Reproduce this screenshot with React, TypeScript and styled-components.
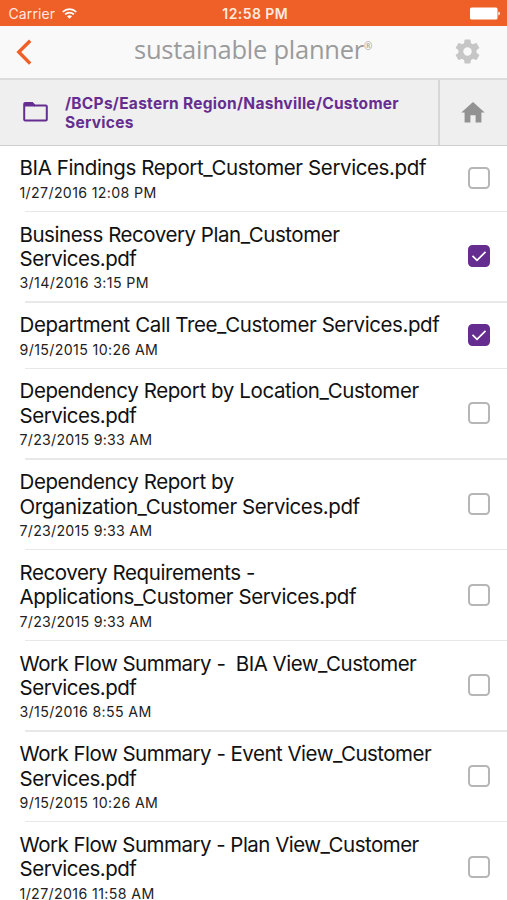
import React from "react";
import styled, { createGlobalStyle } from "styled-components";

const GlobalStyle = createGlobalStyle`
  * { box-sizing: border-box; }
  html, body { margin: 0; padding: 0; background: #fff; }
  body { overflow: hidden; font-family: Inter, "Liberation Sans", sans-serif; color: #111; }
`;

const Screen = styled.div`
  width: 507px;
  height: 900px;
  overflow: hidden;
  display: flex;
  flex-direction: column;
  background: #fff;
`;

const StatusBar = styled.div`
  flex: none;
  height: 25.5px;
  padding: 2px 7px 0 8.5px;
  display: grid;
  grid-template-columns: 1fr auto 1fr;
  align-items: center;
  background: #ef5f28;
  color: #ffe9df;
`;

const Carrier = styled.div`
  display: flex;
  align-items: center;
  gap: 7px;
  font-size: 14px;
  line-height: 20px;
  letter-spacing: 0.1px;
`;

const Clock = styled.div`
  padding-left: 2px;
  font-size: 14px;
  line-height: 20px;
  font-weight: 600;
  letter-spacing: 0.45px;
  white-space: nowrap;
`;

const Battery = styled.div`
  display: flex;
  justify-content: flex-end;
`;

const NavBar = styled.header`
  flex: none;
  height: 54.2px;
  padding: 0 25px 0 16px;
  display: flex;
  align-items: center;
  justify-content: space-between;
  background: #f9f9f9;
  border-bottom: 2px solid #dcdcdc;
`;

const IconButton = styled.button`
  padding: 0;
  border: 0;
  background: none;
  display: flex;
`;

const Brand = styled.h1`
  margin: 0 0 5px 20px;
  font-family: "Open Sans", "Noto Sans", sans-serif;
  font-size: 25.5px;
  font-weight: 400;
  line-height: 34px;
  letter-spacing: -0.25px;
  color: #9b9b9b;
  white-space: nowrap;
`;

const Registered = styled.span`
  font-size: 10px;
  line-height: 1;
  vertical-align: 9px;
`;

const PathBar = styled.div`
  flex: none;
  height: 66px;
  display: flex;
  background: #efefef;
  border-bottom: 1.5px solid #d0d0d0;
`;

const PathInfo = styled.div`
  flex: 1;
  padding-left: 23px;
  display: flex;
  align-items: center;
  gap: 17px;
`;

const PathText = styled.div`
  width: 350px;
  margin-top: 1px;
  font-size: 15.5px;
  font-weight: 700;
  line-height: 19px;
  letter-spacing: 0.28px;
  color: #662d91;
`;

const HomeCell = styled.div`
  width: 69px;
  padding-right: 2px;
  display: flex;
  align-items: center;
  justify-content: center;
  border-left: 2px solid #d6d6d6;
`;

const List = styled.ul`
  margin: 0;
  padding: 0;
  list-style: none;
`;

const Row = styled.li`
  padding: 10.6px 17px 0 19.5px;
  display: flex;
  flex-wrap: wrap;
  align-items: center;
  justify-content: space-between;
`;

const Divider = styled.div`
  width: calc(100% + 11px);
  height: 1.3px;
  margin: 5.9px -17px 0 5.5px;
  background: #e8e8e8;
`;

const Title = styled.div<{ $tracking: number }>`
  font-size: 20.5px;
  line-height: 24.45px;
  letter-spacing: ${(p) => p.$tracking}px;
  white-space: pre;
`;

const Stamp = styled.div<{ $tracking: number }>`
  font-size: 14.2px;
  line-height: 24px;
  letter-spacing: ${(p) => p.$tracking}px;
  color: #222;
`;

const Box = styled.span<{ $checked: boolean }>`
  flex: none;
  width: 22px;
  height: 22px;
  margin-bottom: 5px;
  display: flex;
  align-items: center;
  justify-content: center;
  border-radius: 4.5px;
  border: 2px solid ${(p) => (p.$checked ? "#662d91" : "#b6b6b6")};
  background: ${(p) => (p.$checked ? "#662d91" : "#fff")};
`;

type Doc = {
  lines: string[];
  tracking: number[];
  date: string;
  dateTracking: number;
  checked?: boolean;
};

const docs: Doc[] = [
  { lines: ["BIA Findings Report_Customer Services.pdf"], tracking: [-0.39], date: "1/27/2016 12:08 PM", dateTracking: 0.34 },
  { lines: ["Business Recovery Plan_Customer", "Services.pdf"], tracking: [-0.46, -0.48], date: "3/14/2016 3:15 PM", dateTracking: 0.36, checked: true },
  { lines: ["Department Call Tree_Customer Services.pdf"], tracking: [-0.41], date: "9/15/2015 10:26 AM", dateTracking: 0.36, checked: true },
  { lines: ["Dependency Report by Location_Customer", "Services.pdf"], tracking: [-0.4, -0.48], date: "7/23/2015 9:33 AM", dateTracking: 0.25 },
  { lines: ["Dependency Report by", "Organization_Customer Services.pdf"], tracking: [-0.4, -0.42], date: "7/23/2015 9:33 AM", dateTracking: 0.25 },
  { lines: ["Recovery Requirements -", "Applications_Customer Services.pdf"], tracking: [-0.42, -0.42], date: "7/23/2015 9:33 AM", dateTracking: 0.25 },
  { lines: ["Work Flow Summary -  BIA View_Customer", "Services.pdf"], tracking: [-0.51, -0.48], date: "3/15/2016 8:55 AM", dateTracking: 0.34 },
  { lines: ["Work Flow Summary - Event View_Customer", "Services.pdf"], tracking: [-0.51, -0.48], date: "9/15/2015 10:26 AM", dateTracking: 0.36 },
  { lines: ["Work Flow Summary - Plan View_Customer", "Services.pdf"], tracking: [-0.52, -0.48], date: "1/27/2016 11:58 AM", dateTracking: 0.37 },
];

const WifiIcon = () => (
  <svg width="15" height="11" viewBox="0 0 15 11" fill="none" stroke="#fff" strokeWidth="1.7">
    <path d="M.7 4C4.5.2 10.5.2 14.3 4" />
    <path d="M3.1 6.4C5.6 4 9.4 4 11.9 6.4" />
    <path d="M7.5 10.8 5 8.2Q7.5 6.3 10 8.2Z" fill="#fff" stroke="none" />
  </svg>
);

const BatteryIcon = () => (
  <svg width="30" height="13" viewBox="0 0 30 13" fill="#fff">
    <rect x="0" y="0.5" width="27.5" height="12" rx="1.5" />
    <path d="M28.4 4.5Q30 5.2 30 6.5T28.4 8.5Z" />
  </svg>
);

const BackIcon = () => (
  <svg width="17" height="26" viewBox="0 0 17 26" fill="none" stroke="#ef5f28" strokeWidth="3.4">
    <path d="M14.2 1.8 2.8 13 14.2 24.6" />
  </svg>
);

const GearIcon = () => (
  <svg width="29" height="30" viewBox="0 0 24 24.8" fill="#c6c6c6">
    <path d="M19.43 12.98c.04-.32.07-.64.07-.98s-.03-.66-.07-.98l2.11-1.65c.19-.15.24-.42.12-.64l-2-3.46c-.12-.22-.39-.3-.61-.22l-2.49 1c-.52-.4-1.08-.73-1.69-.98l-.38-2.65A.49.49 0 0 0 14 2h-4c-.25 0-.46.18-.49.42l-.38 2.65c-.61.25-1.17.59-1.69.98l-2.49-1c-.23-.09-.49 0-.61.22l-2 3.46c-.13.22-.07.49.12.64l2.11 1.65c-.04.32-.07.65-.07.98s.03.66.07.98l-2.11 1.65c-.19.15-.24.42-.12.64l2 3.46c.12.22.39.3.61.22l2.49-1c.52.4 1.08.73 1.69.98l.38 2.65c.03.24.24.42.49.42h4c.25 0 .46-.18.49-.42l.38-2.65c.61-.25 1.17-.59 1.69-.98l2.49 1c.23.09.49 0 .61-.22l2-3.46c.12-.22.07-.49-.12-.64l-2.11-1.65zM12 15.5a3.5 3.5 0 1 1 0-7 3.5 3.5 0 0 1 0 7z" />
  </svg>
);

const FolderIcon = () => (
  <svg width="25" height="20" viewBox="0 0 25 20">
    <path d="M1.2 17.5V2Q1.2 1 2.2 1H9.3L11.8 3.6H22.8Q23.8 3.6 23.8 4.6V17.5Q23.8 18.6 22.8 18.6H2.2Q1.2 18.6 1.2 17.5Z" fill="none" stroke="#662d91" strokeWidth="2" />
    <path d="M1 1H9.3L12 4.4H1Z" fill="#662d91" />
  </svg>
);

const HomeIcon = () => (
  <svg width="24" height="21" viewBox="0 0 24 21" fill="#929292">
    <path d="M12 0 .3 10.6H3.6V20.5H9.4V13.3H14.6V20.5H20.4V10.6H23.7Z" />
  </svg>
);

const CheckIcon = () => (
  <svg width="16" height="12" viewBox="0 0 16 12" fill="none" stroke="#fff" strokeWidth="1.7">
    <path d="M1.5 5.8 6 10.3 14.5 1.9" />
  </svg>
);

export default function App() {
  return (
    <>
      <GlobalStyle />
      <Screen>
        <StatusBar>
          <Carrier>Carrier <WifiIcon /></Carrier>
          <Clock>12:58 PM</Clock>
          <Battery><BatteryIcon /></Battery>
        </StatusBar>
        <NavBar>
          <IconButton aria-label="Back"><BackIcon /></IconButton>
          <Brand>sustainable planner<Registered>®</Registered></Brand>
          <IconButton aria-label="Settings"><GearIcon /></IconButton>
        </NavBar>
        <PathBar>
          <PathInfo>
            <FolderIcon />
            <PathText>/BCPs/Eastern Region/Nashville/Customer Services</PathText>
          </PathInfo>
          <HomeCell><HomeIcon /></HomeCell>
        </PathBar>
        <List>
          {docs.map((doc) => (
            <Row key={doc.lines.join(" ")}>
              <div>
                {doc.lines.map((line, i) => (
                  <Title key={line} $tracking={doc.tracking[i]}>{line}</Title>
                ))}
                <Stamp $tracking={doc.dateTracking}>{doc.date}</Stamp>
              </div>
              <Box $checked={!!doc.checked}>{doc.checked && <CheckIcon />}</Box>
              <Divider />
            </Row>
          ))}
        </List>
      </Screen>
    </>
  );
}
